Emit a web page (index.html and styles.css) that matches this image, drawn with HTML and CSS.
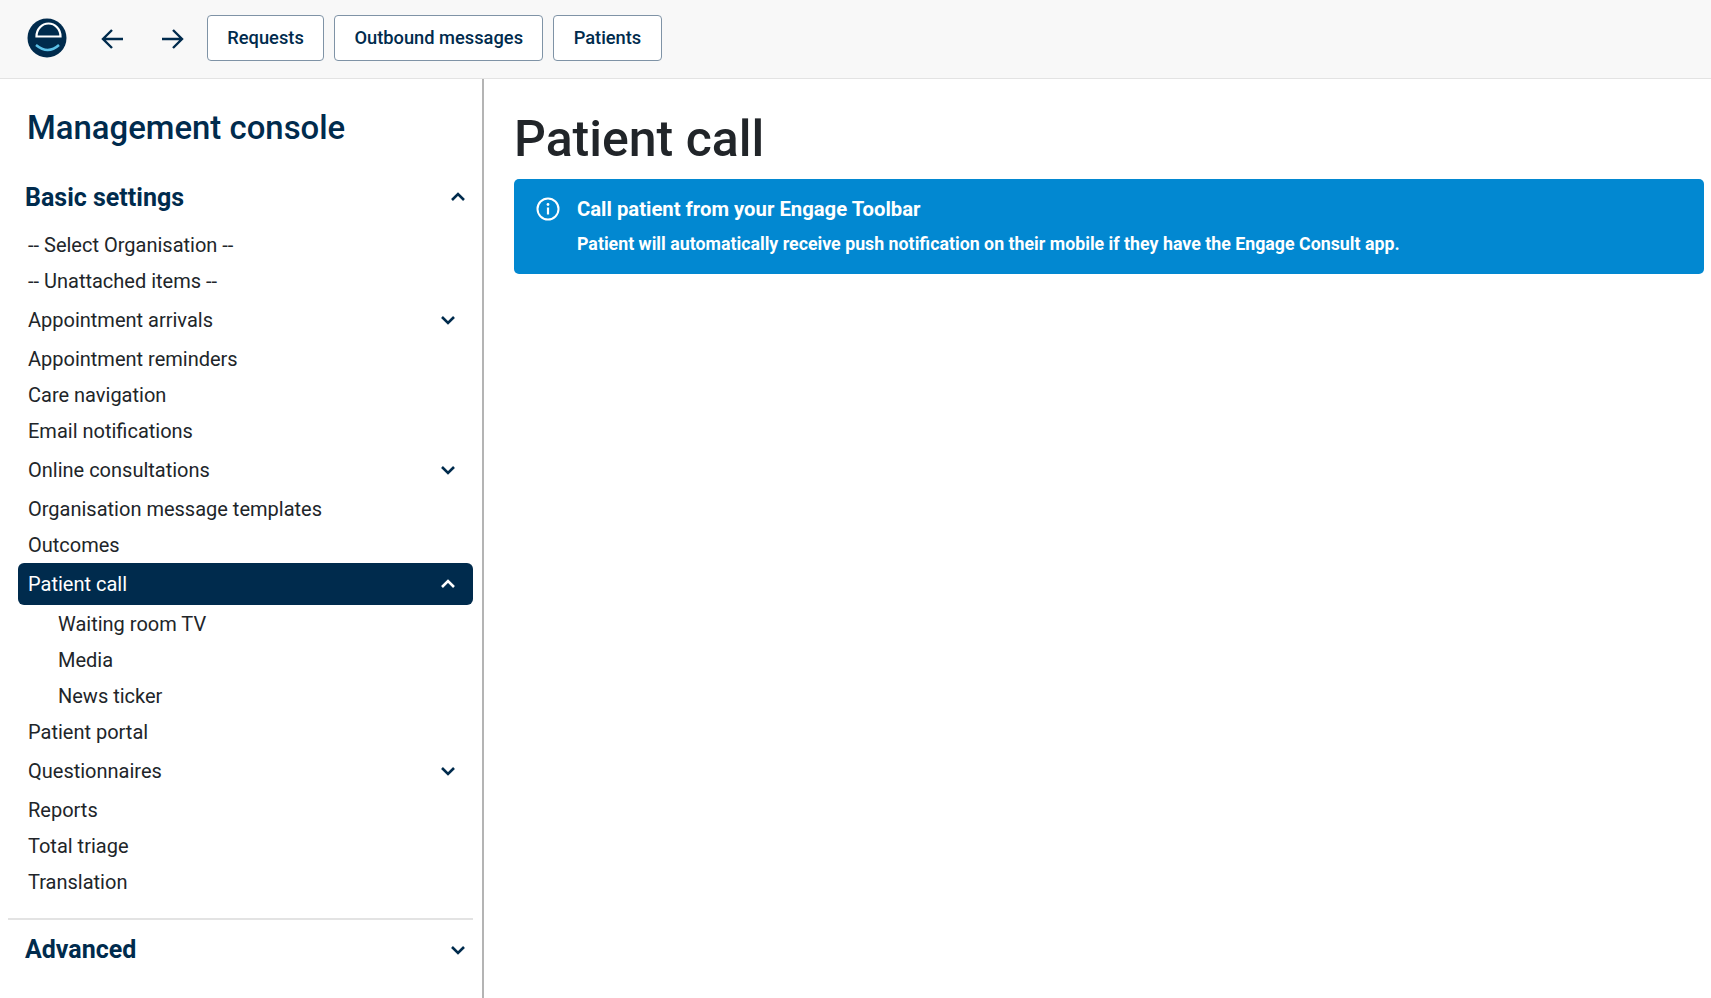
FILE: index.html
```html
<!DOCTYPE html>
<html lang="en">
<head>
  <meta charset="UTF-8" />
  <title>Patient call</title>
  <link rel="stylesheet" href="styles.css">
</head>
<body>
  <header class="topbar">
    <svg class="logo" viewBox="0 0 40 40" width="40" height="40">
      <circle cx="20" cy="20" r="19.5" fill="#002b4d"/>
      <path d="M9.500 18.500a12 13 0 0 1 24 0z" fill="none" stroke="#fff" stroke-width="2.2"/>
      <path d="M9 27Q21 37 32 27" fill="none" stroke="#5cc1e8" stroke-width="2.4"/>
    </svg>
    <button class="nav-arrow" aria-label="Back">
      <svg viewBox="0 0 24 24" width="24" height="24"><path d="M22 12H3M11 3l-9 9 9 9" fill="none" stroke="#002b4d" stroke-width="2.4"/></svg>
    </button>
    <button class="nav-arrow" aria-label="Forward">
      <svg viewBox="0 0 24 24" width="24" height="24"><path d="M2 12h19M13 3l9 9-9 9" fill="none" stroke="#002b4d" stroke-width="2.4"/></svg>
    </button>
    <div class="top-links">
      <button class="top-btn">Requests</button>
      <button class="top-btn">Outbound messages</button>
      <button class="top-btn">Patients</button>
    </div>
  </header>

  <div class="layout">
    <aside class="sidebar">
      <h2 class="console-title">Management console</h2>

      <div class="section-head">
        <span>Basic settings</span>
        <svg class="chev" viewBox="0 0 16 16" width="16" height="16"><path d="M2 11l6-6 6 6" /></svg>
      </div>

      <ul class="menu">
        <li class="item">-- Select Organisation --</li>
        <li class="item">-- Unattached items --</li>
        <li class="item item-sub">Appointment arrivals
          <svg class="chev" viewBox="0 0 16 16" width="16" height="16"><path d="M2 5l6 6 6-6" /></svg>
        </li>
        <li class="item">Appointment reminders</li>
        <li class="item">Care navigation</li>
        <li class="item">Email notifications</li>
        <li class="item item-sub">Online consultations
          <svg class="chev" viewBox="0 0 16 16" width="16" height="16"><path d="M2 5l6 6 6-6" /></svg>
        </li>
        <li class="item">Organisation message templates</li>
        <li class="item">Outcomes</li>
        <li class="item item-sub active">Patient call
          <svg class="chev" viewBox="0 0 16 16" width="16" height="16"><path d="M2 11l6-6 6 6" /></svg>
        </li>
        <li class="item child first-child">Waiting room TV</li>
        <li class="item child">Media</li>
        <li class="item child">News ticker</li>
        <li class="item">Patient portal</li>
        <li class="item item-sub">Questionnaires
          <svg class="chev" viewBox="0 0 16 16" width="16" height="16"><path d="M2 5l6 6 6-6" /></svg>
        </li>
        <li class="item">Reports</li>
        <li class="item">Total triage</li>
        <li class="item">Translation</li>
      </ul>

      <div class="section-head advanced">
        <span>Advanced</span>
        <svg class="chev" viewBox="0 0 16 16" width="16" height="16"><path d="M2 5l6 6 6-6" /></svg>
      </div>
    </aside>

    <main class="content">
      <h1>Patient call</h1>
      <div class="alert">
        <svg class="alert-icon" viewBox="0 0 24 24" width="24" height="24">
          <circle cx="12" cy="12" r="10.5" fill="none" stroke="#fff" stroke-width="2"/>
          <circle cx="12" cy="7.500" r="1.400" fill="#fff"/>
          <path d="M12 10.500v7" fill="none" stroke="#fff" stroke-width="2.200"/>
        </svg>
        <div>
          <div class="alert-title">Call patient from your Engage Toolbar</div>
          <div class="alert-body">Patient will automatically receive push notification on their mobile if they have the Engage Consult app.</div>
        </div>
      </div>
    </main>
  </div>
</body>
</html>
```
FILE: styles.css
```css
* { margin: 0; padding: 0; box-sizing: border-box; }
html, body { height: 100%; overflow: hidden; }
body {
  font-family: Roboto, "Liberation Sans", sans-serif;
  background: #fff;
  color: #212529;
  display: flex;
  flex-direction: column;
}

/* Top bar */
.topbar {
  height: 79px;
  flex: none;
  background: #f8f8f8;
  border-bottom: 1px solid #e3e3e3;
  display: flex;
  align-items: center;
  padding: 0 0 3px 27px;
}
.logo { flex: none; }
.nav-arrow {
  border: none;
  background: none;
  width: 24px;
  height: 24px;
  margin-left: 34px;
  margin-top: 2px;
  display: flex;
}
.nav-arrow + .nav-arrow { margin-left: 35px; }
.top-links {
  display: flex;
  gap: 10px;
  margin-left: 23px;
}
.top-btn {
  height: 46px;
  padding: 0 19.3px;
  background: #fff;
  border: 1px solid #7f93a6;
  border-radius: 4px;
  font-family: inherit;
  font-size: 18.3px;
  font-weight: 500;
  color: #002b4d;
}

/* Sidebar */
.layout {
  flex: 1;
  display: flex;
  min-height: 0;
}
.sidebar {
  width: 484px;
  flex: none;
  border-right: 2px solid #b4b4b4;
  padding: 0 9px 0 8px;
}
.console-title {
  font-size: 32.9px;
  font-weight: 500;
  line-height: 38px;
  color: #002b4d;
  margin: 30px 0 0 19px;
}
.section-head {
  display: flex;
  align-items: center;
  justify-content: space-between;
  height: 40px;
  margin-top: 30px;
  padding: 0 7px 0 17px;
  font-size: 25px;
  font-weight: 700;
  color: #002b4d;
}
.chev { flex: none; }
.chev path {
  fill: none;
  stroke: #002b4d;
  stroke-width: 2.6;
}
.menu {
  list-style: none;
  margin-top: 10px;
  padding-left: 10px;
}
.item {
  height: 36px;
  display: flex;
  align-items: center;
  padding-left: 10px;
  font-size: 20px;
  color: #212529;
}
.item-sub {
  height: 42px;
  justify-content: space-between;
  padding-right: 17px;
}
.active {
  background: #002b4d;
  color: #fff;
  border-radius: 6px;
}
.active .chev path { stroke: #fff; }
.child { padding-left: 40px; }
.first-child { margin-top: 1px; }
.advanced {
  height: 61px;
  margin-top: 18px;
  border-top: 2px solid #e3e3e3;
}

/* Main */
.content {
  flex: 1;
  padding: 0 7px 0 30px;
}
.content h1 {
  font-size: 50px;
  font-weight: 500;
  line-height: 60px;
  margin-top: 30px;
  margin-bottom: 10px;
}
.alert {
  background: #0288d1;
  color: #fff;
  border-radius: 5px;
  height: 95px;
  display: flex;
  padding: 18px 22px;
  gap: 17px;
}
.alert-icon { flex: none; }
.alert-title {
  font-size: 20.3px;
  font-weight: 700;
  line-height: 24px;
}
.alert-body {
  font-size: 17.8px;
  font-weight: 700;
  line-height: 24px;
  margin-top: 11px;
}
```
